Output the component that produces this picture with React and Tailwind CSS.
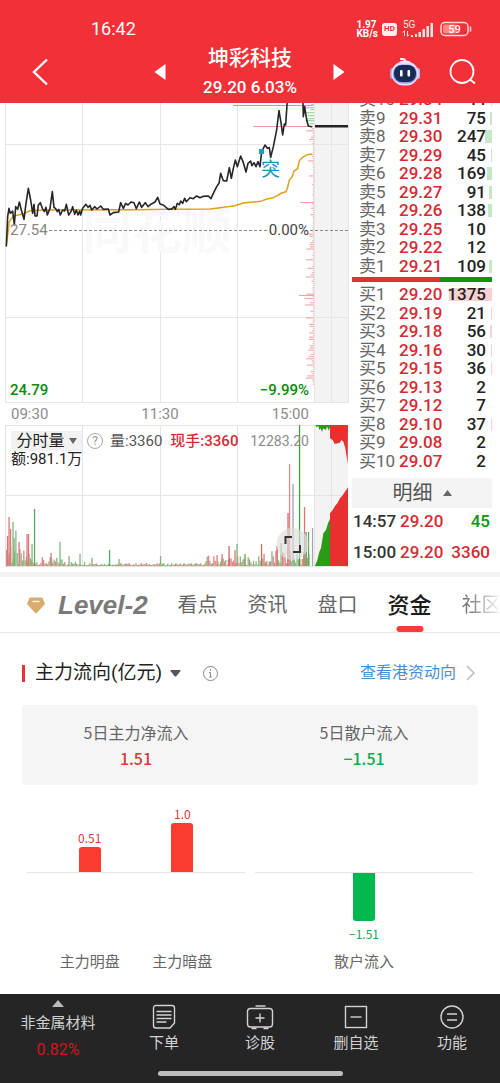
import React from "react";

const ASKS = [
  ["10", "29.34", "44", 1], ["9", "29.31", "75", 2], ["8", "29.30", "247", 7], ["7", "29.29", "45", 1],
  ["6", "29.28", "169", 5], ["5", "29.27", "91", 3], ["4", "29.26", "138", 4], ["3", "29.25", "10", 0],
  ["2", "29.22", "12", 0], ["1", "29.21", "109", 3],
];
const BIDS = [
  ["1", "29.20", "1375", 43], ["2", "29.19", "21", 1], ["3", "29.18", "56", 2], ["4", "29.16", "30", 1],
  ["5", "29.15", "36", 1], ["6", "29.13", "2", 0], ["7", "29.12", "7", 0], ["8", "29.10", "37", 1],
  ["9", "29.08", "2", 0], ["10", "29.07", "2", 0],
];

// Deterministic noise for the minor volume and turnover strokes.
const noise = (i) => {
  const v = Math.sin(i * 12.9898) * 43758.5453;
  return v - Math.floor(v);
};
const envelope = (x) => {
  if (x < 16) return 36;
  if (x < 30) return 16;
  if (x < 65) return 8;
  if (x < 100) return 4;
  if (x < 205) return 2;
  if (x < 225) return 10;
  if (x < 270) return 9;
  return 17;
};
const MINOR = Array.from({ length: 230 }, (_, i) => {
  const x = 6 + i * 1.32;
  return { x, h: 1 + envelope(x) * noise(i + 3) ** 1.5, c: noise(i * 7 + 1) > 0.5 ? "#dd8585" : "#86b981" };
});
const SPIKES = [
  [7.5, 30, "#d77"], [9, 49, "#d77"], [10.5, 37, "#d77"], [13, 44, "#7fb57a"], [14, 28, "#7fb57a"], [19, 24, "#d77"],
  [27, 32, "#d77"], [28.5, 32, "#d77"], [32, 22, "#7fb57a"], [34.5, 57, "#5ea65a"], [51, 13, "#d77"], [60, 24, "#7fb57a"],
  [69, 10, "#7fb57a"], [80, 12, "#7fb57a"], [92, 8, "#7fb57a"], [109.5, 16, "#5ea65a"], [119, 7, "#7fb57a"],
  [160.5, 10, "#7fb57a"], [217, 11, "#d77"], [222, 12, "#d77"], [229, 20, "#e06060"], [235, 16, "#d77"], [237, 22, "#7fb57a"],
  [245, 12, "#5ea65a"], [261.5, 22, "#e06060"], [264, 12, "#d77"], [277, 20, "#d77"], [281, 23, "#7fb57a"],
  [288, 53, "#e06060"], [289.5, 102, "#e58a8a"], [293, 82, "#a3a3ab"], [299.5, 142, "#3fa03f"], [304.5, 59, "#d77"],
  [306, 34, "#5ea65a"], [308.5, 34, "#5ea65a"], [312.5, 38, "#a3a3ab"],
];
const TURNOVER = Array.from({ length: 120 }, (_, i) => {
  const y = 128 + i * 2.15;
  return { y, w: 1 + 9 * noise(i + 40) ** 4 };
});

const PRICE_A =
  "19,438 23,350 27,325 31,340 38,333 43,375 47,320 53,328 58,306 64,330 72,358 78,310 85,265 92,300 98,340 102,313 105,348 111,348 115,315 121,308 127,325 133,335 138,322 142,345 150,325 157,275 162,322 167,326 172,335 176,328 181,345 188,330 194,333 199,313 206,345 213,335 218,320 224,343 229,330 234,345 239,333 242,345 248,325 258,313 264,322 270,316 275,330 284,320 291,327 302,318 310,328 325,327 330,345 340,338 356,336 362,308 370,325 377,310 384,315 393,306 402,308 409,326 418,306 425,322 436,308 444,320 454,312 465,306 473,292 480,312 490,315 505,328 515,327";
const PRICE_B =
  "515,327 522,320 526,328 532,310 538,314 542,303 548,310 554,295 559,305 570,293 580,296 590,288 600,293 610,289 625,288 633,296 640,280 650,260 657,250 662,220 670,242 680,243 688,203 694,235 700,205 706,180 712,200 722,168 730,188 738,216 744,190 752,183 756,197 762,188 768,200 774,185 780,200 785,155 790,145 795,135 802,145 808,143 812,172 820,140 825,115 830,90 837,32 843,68 848,105 853,72 857,75 862,0 880,-20 905,-10 909,10 910,50 914,20 920,60 925,78 935,80";
const AVERAGE =
  "20,430 28,365 40,348 70,342 90,332 130,330 400,329 510,328 630,327 660,323 705,317 730,309 760,306 782,304 800,297 820,293 835,285 845,279 858,275 863,262 868,240 876,232 882,213 893,206 898,182 908,172 922,164 935,162";

function PriceChart() {
  return (
    <svg viewBox="0 103 350 300" className="block w-full" role="img" aria-label="分时走势">
      <rect x="315" y="100" width="33" height="303" fill="#f3f3f4" />
      <g stroke="#e6e6e6" strokeWidth="1" fill="none">
        <path d="M5.5 100V402.5M82.5 100V402.5M160.5 100V402.5M237.5 100V402.5M314.5 100V402.5M331.5 100V402.5M348.5 100V402.5" />
        <path d="M5 144.5H348M5 317.5H348M5 402.5H349" />
      </g>
      <text x="82" y="249" fontSize="50" fontWeight="700" fill="#f9f9f9">同花顺</text>
      <path d="M49 230.5H268M310 230.5H348" stroke="#8a8a8a" strokeWidth="1" strokeDasharray="3 2" />
      <path d="M233 105.5H313" stroke="#7cc47c" />
      <path d="M253 126.5H313" stroke="#f09a9a" />
      {[104, 107, 109, 112, 115, 118, 120, 123].map((y, i) => (
        <rect key={y} x={314 - 3 - noise(i) * 9} y={y} width={3 + noise(i) * 9} height="1.4" fill="#a9d8a9" />
      ))}
      {TURNOVER.map((t) => (
        <rect key={t.y} x={314 - t.w} y={t.y} width={t.w} height="1.3" fill="#f3b3b3" />
      ))}
      <path d="M300 202.5H314M299 295.5H314" stroke="#f0a5a5" />
      <g transform="translate(0 100) scale(.33333)" fill="none" strokeLinejoin="round" strokeLinecap="round">
        <polyline points={AVERAGE} stroke="#dba21f" strokeWidth="4.5" />
        <polyline points={PRICE_A} stroke="#262626" strokeWidth="4.8" />
        <polyline points={PRICE_B} stroke="#262626" strokeWidth="4.8" />
      </g>
      <path d="M315 126.2H348" stroke="#222" strokeWidth="2.4" />
      <rect x="259" y="149" width="5" height="5" fill="#1a9fbd" />
      <text x="261" y="176" fontSize="19" fill="#1593b3">突</text>
      <g fontSize="15" className="font-['Roboto','Noto_Sans_CJK_SC',sans-serif]">
        <text x="10" y="235" fill="#858585">27.54</text>
        <text x="309" y="235" fill="#444" textAnchor="end">0.00%</text>
        <text x="10" y="395" fill="#0b8a0b" fontWeight="500">24.79</text>
        <text x="309" y="395" fill="#0b8a0b" fontWeight="500" textAnchor="end">−9.99%</text>
      </g>
    </svg>
  );
}

function VolumeChart() {
  return (
    <svg viewBox="0 425 350 142" className="block w-full" role="img" aria-label="成交量">
      <rect x="315" y="425" width="33" height="141" fill="#f3f3f4" />
      <path
        d="M5.5 425V566M82.5 425V566M160.5 425V566M237.5 425V566M314.5 425V566M331.5 425V566M5 425.5H348M5 495.5H348M5 566.5H349"
        stroke="#e4e4e4" fill="none"
      />
      {MINOR.map((b) => (
        <rect key={b.x} x={b.x} y={566 - b.h} width="1.3" height={b.h} fill={b.c} />
      ))}
      {SPIKES.map(([x, h, c]) => (
        <rect key={x} x={x - 0.6} y={566 - h} width="1.3" height={h} fill={c} />
      ))}
      <g transform="translate(200 370) scale(.33333)">
        <path d="M345 588 352 570 358 545 363 535 370 490 378 480 384 460 391 445V588Z" fill="#2a9a17" />
        <path d="M390 588V430L398 420 405 408 412 400 420 385 428 376 435 365 444 352V588Z" fill="#e83030" />
        <path d="M346 164 350 172 355 168 358 180 362 175 366 186 370 175 376 180 382 170 386 182 391 168V164Z" fill="#2a9a17" />
        <path d="M390 164V205L398 210 404 222 420 218 424 210 430 215 436 235 440 262 443 282 444 164Z" fill="#e83030" />
      </g>
      <circle cx="292.500" cy="544" r="16" fill="#ddd" fillOpacity=".65" />
      <path d="M285.500 544V537H292M300 545V552H293" fill="none" stroke="#333" strokeWidth="2" />
    </svg>
  );
}

function BookTable({ side, rows, bar }) {
  return (
    <table className="h-[185px] w-full shrink-0 table-fixed border-collapse" aria-label={side}>
      <colgroup>
        <col className="w-[47px]" />
        <col className="w-[44px]" />
        <col />
      </colgroup>
      <tbody>
        {rows.map(([n, price, vol, w]) => (
          <tr key={n} className="text-[17px] leading-[18px]">
            <th scope="row" className="whitespace-nowrap p-0 pl-[7px] text-left font-normal text-[#666]">
              {side}{n}
            </th>
            <td className="p-0 font-medium text-[#d42b35]">{price}</td>
            <td className="relative p-0 pr-[6px] text-right font-medium text-[#222]">
              <span className={"absolute right-0 top-[3px] h-[13px] " + bar} style={{ width: w }} />
              <span className="relative">{vol}</span>
            </td>
          </tr>
        ))}
      </tbody>
    </table>
  );
}

function StatusBar() {
  return (
    <div className="flex h-[22px] items-center justify-between pl-[91px] pr-7">
      <span className="text-[18px] leading-[22px]">16:42</span>
      <div className="flex items-center gap-1">
        <span className="text-[10px] font-bold leading-[9px]">1.97<br />KB/s</span>
        <span className="flex h-[13px] w-[15px] items-center justify-center rounded-[3px] bg-[#fff0ee] text-[8px] font-bold text-[#f03038]">HD</span>
        <svg width="33" height="20" viewBox="0 0 33 20" fill="#ffe4e2" className="ml-px" aria-hidden="true">
          <text x="1" y="9" fontSize="10">5G</text>
          <path d="M2.500 12v5M1 13.500l1.500-2M5.500 12v5M7 15.500l-1.500 2" stroke="#ffe4e2" fill="none" />
          <path d="M9 16h2v2H9zM13 15h2v3h-2zM16.500 13h2.500v5h-2.500zM20.500 10h2.500v8h-2.500zM24.500 7H27v11h-2.500zM28.500 4H31v14h-2.500z" />
        </svg>
        <svg width="32" height="16" viewBox="0 0 32 16" className="ml-px" aria-hidden="true">
          <rect x="1" y="1.500" width="27" height="13" rx="4" fill="none" stroke="#ffd9d7" strokeWidth="1.500" />
          <rect x="3" y="3.500" width="14" height="9" rx="2" fill="#ff8583" />
          <path d="M30.500 5.500v5" stroke="#ffd9d7" strokeWidth="1.500" />
          <text x="14.500" y="12" fontSize="11" fontWeight="500" fill="#fff" textAnchor="middle">59</text>
        </svg>
      </div>
    </div>
  );
}

function Robot() {
  return (
    <svg width="32" height="30" viewBox="0 0 32 30" aria-hidden="true">
      <path d="M16 5c1-2-1-3.500-4-3" fill="none" stroke="#fff" strokeWidth="2" strokeLinecap="round" />
      <ellipse cx="16" cy="6" rx="6" ry="2.500" fill="#fff" />
      <rect x="1" y="11" width="5" height="11" rx="2.500" fill="#a99bef" />
      <rect x="26" y="11" width="5" height="11" rx="2.500" fill="#c3b4fa" />
      <rect x="2.500" y="4.500" width="27" height="24" rx="12" fill="#e6e1ff" />
      <rect x="4" y="7.500" width="24" height="19" rx="9" fill="#8c9be8" />
      <rect x="5" y="8" width="22" height="17" rx="8" fill="#182a55" />
      <rect x="11" y="13" width="2.600" height="6.500" rx="1" fill="#fff" />
      <rect x="18.500" y="13" width="2.600" height="6.500" rx="1" fill="#fff" />
    </svg>
  );
}

function Header() {
  return (
    <header className="bg-[#f23038] pt-[18px] text-white">
      <StatusBar />
      <div className="grid h-[63px] grid-cols-[1fr_auto_1fr] items-center">
        <div className="flex items-center justify-between pl-8 pr-[37px]">
          <button aria-label="返回">
            <svg width="16" height="28" viewBox="0 0 16 28" fill="none" stroke="#fff" strokeWidth="2.400"><path d="M15 1.500 2 14l13 12.500" /></svg>
          </button>
          <button aria-label="上一只">
            <svg width="12" height="16" viewBox="0 0 12 16" fill="#fff"><path d="M11.500 0v16L.5 8z" /></svg>
          </button>
        </div>
        <div className="pt-px text-center">
          <h1 className="text-[21px] font-medium leading-[30px]">坤彩科技</h1>
          <p className="text-[17px] font-medium leading-[28px]">29.20 6.03%</p>
        </div>
        <div className="flex items-center pl-[36px] pr-[23px]">
          <button aria-label="下一只">
            <svg width="12" height="16" viewBox="0 0 12 16" fill="#fff"><path d="M.5 0v16l11-8z" /></svg>
          </button>
          <button aria-label="智能助手" className="ml-auto"><Robot /></button>
          <button aria-label="搜索" className="ml-7">
            <svg width="28" height="28" viewBox="0 0 28 28" fill="none" stroke="#fff" strokeWidth="1.800">
              <circle cx="13" cy="13.500" r="11.500" /><path d="M21 21.500l5 4" />
            </svg>
          </button>
        </div>
      </div>
    </header>
  );
}

function Market() {
  return (
    <section className="flex">
      <div className="min-w-0 flex-1">
        <PriceChart />
        <div className="flex h-[22px] items-center justify-between pl-[11px] pr-[41px] text-[15px] text-[#8c8c8c]">
          <span>09:30</span><span>11:30</span><span>15:00</span>
        </div>
        <div className="relative">
          <VolumeChart />
          <div className="absolute left-[11px] right-[41px] top-[6px] text-[15px] leading-5">
            <div className="flex items-center whitespace-nowrap">
              <button className="flex h-5 w-[71px] items-center justify-center gap-1 bg-[#f2f2f2] text-[16px] leading-5 text-[#222]">
                分时量
                <svg width="8" height="6" viewBox="0 0 8 6" fill="#666"><path d="M0 0h8L4 6z" /></svg>
              </button>
              <button aria-label="说明" className="ml-[5px] flex h-4 w-4 items-center justify-center rounded-full border border-[#aaa] text-[12px] leading-3 text-[#999]">?</button>
              <span className="ml-[7px] text-[#555]">量:3360</span>
              <span className="ml-2 font-medium text-[#d42b35]">现手:3360</span>
              <span className="ml-auto text-[14px] text-[#8c8c8c]">12283.20</span>
            </div>
            <div className="leading-4 text-[#222]">额:981.1万</div>
          </div>
        </div>
      </div>
      <div className="w-[150px] shrink-0 pl-[2px] pr-2">
        <div className="flex h-[172px] flex-col justify-end overflow-hidden">
          <BookTable side="卖" rows={ASKS} bar="bg-[#c6e8c9]" />
        </div>
        <div className="mt-[2px] flex h-[5px]">
          <div className="w-[63%] bg-[#e13232]" />
          <div className="flex-1 bg-[#0b960b]" />
        </div>
        <div className="mt-[3px]">
          <BookTable side="买" rows={BIDS} bar="bg-[#fbd0d2]" />
        </div>
        <button className="mt-2 flex h-[30px] w-full items-center justify-center gap-[10px] bg-[#f4f4f4] text-[20px] leading-[30px] text-[#555]">
          明细
          <svg width="9" height="6" viewBox="0 0 9 6" fill="#666"><path d="M0 6h9L4.500 0z" /></svg>
        </button>
        <table className="w-full table-fixed text-[17px] font-medium leading-[26px]" aria-label="成交明细">
          <colgroup>
            <col className="w-[48px]" />
            <col className="w-[44px]" />
            <col />
          </colgroup>
          <tbody>
            <tr>
              <td className="p-0 pb-[5px] pl-px text-[#333]">14:57</td>
              <td className="p-0 pb-[5px] text-[#d42b35]">29.20</td>
              <td className="p-0 pb-[5px] pr-[2px] text-right text-[#0b960b]">45</td>
            </tr>
            <tr>
              <td className="p-0 pb-[5px] pl-px text-[#333]">15:00</td>
              <td className="p-0 pb-[5px] text-[#d42b35]">29.20</td>
              <td className="p-0 pb-[5px] pr-[2px] text-right text-[#d42b35]">3360</td>
            </tr>
          </tbody>
        </table>
      </div>
    </section>
  );
}

function Tabs() {
  return (
    <nav className="flex h-[61px] items-center gap-[30px] overflow-hidden whitespace-nowrap border-b border-t-[5px] border-b-[#e8e8e8] border-t-[#f4f4f4] pl-[27px] pt-px text-[20px] text-[#666]">
      <button className="flex items-center gap-[13px]">
        <svg width="18" height="17" viewBox="0 0 18 17" aria-hidden="true">
          <path d="M4 .5h10q1 0 1.500.8L17.700 6q.4.900-.3 1.700L10 15.800q-1 1-2 0L.6 7.700Q-.1 6.900.3 6l2.200-4.700Q3 .5 4 .5z" fill="#d9ab6c" />
          <path d="M6 4.500h6" stroke="#fff3dc" strokeWidth="1.500" strokeLinecap="round" />
        </svg>
        <span className="font-['Liberation_Sans',sans-serif] text-[26px] font-bold italic leading-8 text-[#7a7a7a]">Level-2</span>
      </button>
      <button>看点</button>
      <button>资讯</button>
      <button>盘口</button>
      <button className="relative flex h-full items-center text-[22px] font-medium text-[#1c1c1c]" aria-current="page">
        资金
        <span className="absolute bottom-0 left-1/2 h-[6px] w-[27px] -translate-x-1/2 rounded-full bg-[#f53c36]" />
      </button>
      <button className="bg-gradient-to-r from-[#666] to-white bg-clip-text text-transparent">社区</button>
    </nav>
  );
}

function FlowSection() {
  return (
    <section className="px-[22px] pb-[22px] pt-[26px]">
      <div className="flex items-center">
        <span className="h-[17px] w-[3px] bg-[#e5323c]" />
        <h2 className="ml-[10px] text-[19px] leading-7 text-[#222]">主力流向(亿元)</h2>
        <button aria-label="切换" className="ml-2">
          <svg width="11" height="7" viewBox="0 0 11 7" fill="#555"><path d="M1 0h9q1 .2.500 1L6.500 6q-1 1-2 0L.5 1Q0 .2 1 0z" /></svg>
        </button>
        <button aria-label="说明" className="ml-[21px]">
          <svg width="17" height="17" viewBox="0 0 17 17" fill="none" stroke="#888"><circle cx="8.500" cy="8.500" r="7" /><path d="M8.500 4v1.800M7 7.500h1.500V12M7 12h3" /></svg>
        </button>
        <a href="#hk" className="ml-auto mr-[3px] flex items-center gap-[10px] text-[16px] leading-7 text-[#4a8fd6]">
          查看港资动向
          <svg width="9" height="16" viewBox="0 0 9 16" fill="none" stroke="#bbb" strokeWidth="1.500"><path d="M1 1l7 7-7 7" /></svg>
        </a>
      </div>
      <div className="mt-[18px] grid h-20 grid-cols-2 rounded bg-[#f5f5f5] pt-[14px] text-center font-['Noto_Sans_CJK_SC',sans-serif] text-[16px] leading-[26px] text-[#666]">
        <div>5日主力净流入<p className="font-medium text-[#d93a3a]">1.51</p></div>
        <div>5日散户流入<p className="font-medium text-[#16a84e]">−1.51</p></div>
      </div>
      <div className="mx-[5px] grid grid-cols-2 gap-[10px] text-center font-['Noto_Sans_CJK_SC',sans-serif] text-[12px] leading-[18px]">
        <div>
          <div className="flex h-[88px] items-end justify-evenly border-b border-[#e6e6e6] text-[#d93a3a]">
            <div className="flex w-[60px] flex-col items-center">0.51<span className="h-[25px] w-[22px] rounded-t-[3px] bg-[#fb3b30]" /></div>
            <div className="flex w-[60px] flex-col items-center">1.0<span className="h-[49px] w-[22px] rounded-t-[3px] bg-[#fb3b30]" /></div>
          </div>
          <div className="flex justify-evenly pt-[77px] text-[15px] leading-[22px] text-[#666]">
            <span>主力明盘</span><span>主力暗盘</span>
          </div>
        </div>
        <div>
          <div className="h-[88px] border-b border-[#e6e6e6]" />
          <div className="flex h-[77px] flex-col items-center gap-1 text-[#16a84e]">
            <span className="h-12 w-[22px] rounded-b-[3px] bg-[#04b850]" />−1.51
          </div>
          <div className="text-[15px] leading-[22px] text-[#666]">散户流入</div>
        </div>
      </div>
    </section>
  );
}

function Footer() {
  const icon = { width: 28, height: 26, viewBox: "0 0 28 26", fill: "none", stroke: "#d2d2d2", strokeWidth: 1.4 };
  return (
    <footer className="bg-[#252525] pb-[7px] text-[15px] text-[#d2d2d2]">
      <div className="flex h-[77px]">
        <button className="flex w-[116px] flex-col items-center pt-[6px]">
          <svg width="12" height="7" viewBox="0 0 12 7" fill="#bbb"><path d="M0 7h12L6 0z" /></svg>
          <span className="mt-[5px] leading-[22px]">非金属材料</span>
          <span className="mt-[6px] text-[16px] leading-5 text-[#d3161c]">0.82%</span>
        </button>
        <button className="flex flex-1 flex-col items-center gap-[2px] pt-[10px] leading-[22px]">
          <svg {...icon}><path d="M6 1.500h16q2.500 0 2.500 2.500v15l-4.500 5H6q-2.500 0-2.500-2.500V4Q3.500 1.500 6 1.500zM6.500 7.500h15M6.500 11h15M6.500 14.500h15M6.500 18h10" /></svg>
          下单
        </button>
        <button className="flex flex-1 flex-col items-center gap-[2px] pt-[10px] leading-[22px]">
          <svg {...icon}><rect x="1.500" y="4.500" width="25" height="18.500" rx="3" /><path d="M9.500 2h10M14 9.500v9M9.500 14h9" /><path d="M5.500 24.200h5M17.500 24.200h5" strokeWidth="2" /></svg>
          诊股
        </button>
        <button className="flex flex-1 flex-col items-center gap-[2px] pt-[10px] leading-[22px]">
          <svg {...icon}><rect x="3.500" y="2.500" width="21" height="21" /><path d="M8.500 13h11" /></svg>
          删自选
        </button>
        <button className="flex flex-1 flex-col items-center gap-[2px] pt-[10px] leading-[22px]">
          <svg {...icon}><circle cx="14" cy="13" r="11" /><path d="M9 10h10M9 16h10" /></svg>
          功能
        </button>
      </div>
      <div className="mx-auto h-[5px] w-[37%] rounded-full bg-[#bdbdbd]" />
    </footer>
  );
}

export default function App() {
  return (
    <div className="flex min-h-screen flex-col bg-white font-['Roboto','Noto_Sans_CJK_SC',sans-serif]">
      <Header />
      <main className="flex-1">
        <Market />
        <div className="pt-[2px]"><Tabs /></div>
        <FlowSection />
      </main>
      <Footer />
    </div>
  );
}
